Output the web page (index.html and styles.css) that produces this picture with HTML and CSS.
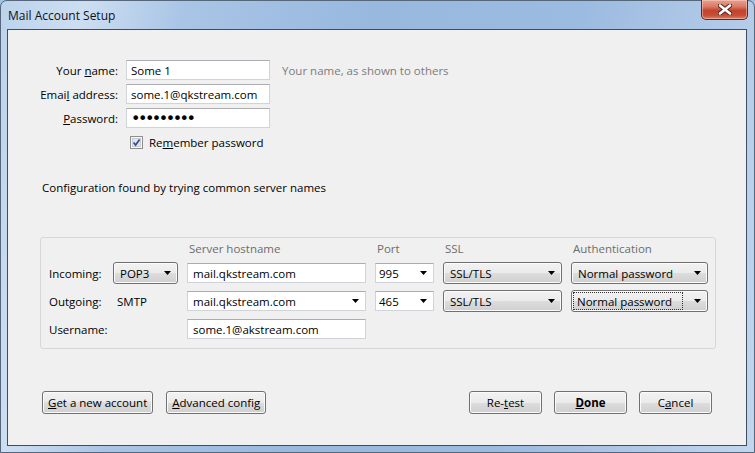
FILE: index.html
```html
<!DOCTYPE html>
<html lang="en">
<head>
    <meta charset="UTF-8">
    <meta name="viewport" content="width=device-width, initial-scale=1.0">
    <title>Mail Account Setup</title>
    <link rel="stylesheet" href="styles.css">
</head>
<body>

<div class="window">
    <div class="titlebar">
        <span class="title">Mail Account Setup</span>
        <div class="close">
            <svg width="14" height="11" viewBox="0 0 14 11">
                <path d="M2 1.5 L12 9.5 M12 1.5 L2 9.5" stroke="#5b2419" stroke-width="4.6" stroke-linecap="round"/>
                <path d="M2 1.5 L12 9.5 M12 1.5 L2 9.5" stroke="#ffffff" stroke-width="2.6" stroke-linecap="round"/>
            </svg>
        </div>
    </div>

    <div class="client">
        <div class="identity">
            <label class="label">Your <u>n</u>ame:</label>
            <input class="field" type="text" value="Some 1">
            <span class="hint">Your name, as shown to others</span>

            <label class="label">Emai<u>l</u> address:</label>
            <input class="field" type="text" value="some.1@qkstream.com">
            <span></span>

            <label class="label"><u>P</u>assword:</label>
            <input class="field password" type="password" value="123456789">
            <span></span>

            <label class="remember">
                <svg class="checkbox" width="13" height="13" viewBox="0 0 13 13">
                    <rect x="0.5" y="0.5" width="12" height="12" fill="#f6f6f6" stroke="#8e8f8f"/>
                    <rect x="2.5" y="2.5" width="8" height="8" fill="#e1e4ea" stroke="#b4bac4" stroke-width="0.6"/>
                    <path d="M3.6 6.4 L5.6 9 L9.6 3.4" stroke="#3a4d88" stroke-width="1.7" fill="none"/>
                </svg>
                <span>Re<u>m</u>ember password</span>
            </label>
        </div>

        <p class="status">Configuration found by trying common server names</p>

        <div class="servers">
            <span></span>
            <span></span>
            <span class="colhead">Server hostname</span>
            <span class="colhead">Port</span>
            <span class="colhead">SSL</span>
            <span class="colhead">Authentication</span>

            <span class="rowlabel">Incoming:</span>
            <div class="dropdown"><span class="value">POP3</span><svg class="arrow" width="7" height="4"><polygon points="0,0 7,0 3.5,4" fill="#000"/></svg></div>
            <input class="field" type="text" value="mail.qkstream.com">
            <div class="combo"><span class="value">995</span><svg class="arrow" width="7" height="4"><polygon points="0,0 7,0 3.5,4" fill="#000"/></svg></div>
            <div class="dropdown"><span class="value">SSL/TLS</span><svg class="arrow" width="7" height="4"><polygon points="0,0 7,0 3.5,4" fill="#000"/></svg></div>
            <div class="dropdown"><span class="value">Normal password</span><svg class="arrow" width="7" height="4"><polygon points="0,0 7,0 3.5,4" fill="#000"/></svg></div>

            <span class="rowlabel">Outgoing:</span>
            <span class="protocol">SMTP</span>
            <div class="combo host"><span class="value">mail.qkstream.com</span><svg class="arrow" width="7" height="4"><polygon points="0,0 7,0 3.5,4" fill="#000"/></svg></div>
            <div class="combo"><span class="value">465</span><svg class="arrow" width="7" height="4"><polygon points="0,0 7,0 3.5,4" fill="#000"/></svg></div>
            <div class="dropdown"><span class="value">SSL/TLS</span><svg class="arrow" width="7" height="4"><polygon points="0,0 7,0 3.5,4" fill="#000"/></svg></div>
            <div class="dropdown focused"><span class="value">Normal password</span><svg class="arrow" width="7" height="4"><polygon points="0,0 7,0 3.5,4" fill="#000"/></svg></div>

            <span class="rowlabel">Username:</span>
            <span></span>
            <input class="field" type="text" value="some.1@akstream.com">
        </div>

        <div class="actions">
            <div class="btn-row">
                <button class="btn"><u>G</u>et a new account</button>
                <button class="btn"><u>A</u>dvanced config</button>
            </div>
            <div class="btn-row">
                <button class="btn">Re-<u>t</u>est</button>
                <button class="btn default"><u>D</u>one</button>
                <button class="btn">C<u>a</u>ncel</button>
            </div>
        </div>
    </div>
</div>

</body>
</html>
```

FILE: styles.css
```css
* {
    box-sizing: border-box;
}
body {
    margin: 0;
    font-family: "Open Sans", "Liberation Sans", sans-serif;
    font-size: 11.5px;
    color: #000;
    background-color: #a3c1e3;
}
.window {
    width: 755px;
    height: 453px;
    display: flex;
    flex-direction: column;
    padding: 0 7px 6px 6px;
    border: 1px solid #56677c;
    border-radius: 7px 7px 0 0;
    background: linear-gradient(100deg, #bcd3ec 0%, #cddef1 10%, #a9c5e6 22%, #98b8de 45%, #9cbbe0 70%, #b2cae8 88%, #c2d6ee 100%);
}
.titlebar {
    height: 28px;
    display: flex;
    align-items: center;
    justify-content: space-between;
}
.title {
    padding-left: 1px;
    font-size: 12px;
    color: #111;
}
.close {
    align-self: flex-start;
    width: 47px;
    height: 20px;
    margin: -1px -1px 0 0;
    display: flex;
    align-items: center;
    justify-content: center;
    border: 1px solid #5c2a22;
    border-top: none;
    border-radius: 0 0 5px 5px;
    background: linear-gradient(#e9a18f 0%, #d97a66 35%, #c2432e 55%, #c64d35 80%, #db8063 100%);
    box-shadow: inset 0 0 0 1px rgba(255, 220, 210, 0.45);
}
.client {
    flex: 1;
    display: flex;
    flex-direction: column;
    padding-top: 30px;
    background-color: #f0f0f0;
    border: 1px solid #3f4d60;
}

/* identity fields */
.identity {
    display: grid;
    grid-template-columns: 110px 144px auto;
    grid-auto-rows: 20px;
    column-gap: 8px;
    row-gap: 4px;
    align-items: center;
}
.label {
    text-align: right;
}
.hint {
    margin-left: 4px;
    color: #7c7c7c;
}
.field {
    height: 20px;
    width: 100%;
    margin: 0;
    padding: 0 4px;
    font-family: inherit;
    font-size: 11.5px;
    color: #000;
    background-color: #fff;
    border: 1px solid #d0d3d8;
    border-top-color: #abadb3;
    outline: none;
}
.password {
    font-family: "DejaVu Sans", sans-serif;
    font-size: 16px;
    letter-spacing: -2.5px;
}
.remember {
    grid-column: 2 / span 2;
    display: flex;
    align-items: center;
    gap: 6px;
    padding-left: 4px;
}
.status {
    margin: 28px 0 0 34px;
    line-height: 16px;
}

/* server settings box */
.servers {
    width: 676px;
    margin: 41px 0 0 32px;
    padding: 3px 7px 8px 8px;
    display: grid;
    grid-template-columns: 55px 65px 179px 59px 119px 137px;
    grid-template-rows: 15px 22px 22px 22px;
    column-gap: 9px;
    row-gap: 6px;
    align-items: center;
    border: 1px solid #d7d7d7;
    border-radius: 3px;
}
.colhead {
    padding-left: 2px;
    color: #6d6d6d;
}
.servers .field {
    padding-left: 5px;
}
.protocol {
    padding-left: 4px;
}
.dropdown,
.combo {
    height: 22px;
    display: flex;
    align-items: center;
    justify-content: space-between;
    padding: 0 6px;
}
.dropdown {
    border: 1px solid #707070;
    border-radius: 3px;
    background: linear-gradient(#f2f2f2 0%, #ebebeb 50%, #dddddd 50%, #cfcfcf 100%);
    box-shadow: inset 0 0 0 1px #fbfbfb;
}
.combo {
    height: 20px;
    padding: 0 6px 0 3px;
    background-color: #fff;
    border: 1px solid #d0d3d8;
    border-top-color: #abadb3;
}
.combo.host {
    padding-left: 5px;
}
.dropdown.focused {
    padding-left: 2px;
}
.dropdown.focused .value {
    flex: 1;
    align-self: stretch;
    display: flex;
    align-items: center;
    margin: 2px 12px 2px 0;
    padding-left: 3px;
    outline: 1px dotted #333;
}

/* bottom buttons */
.actions {
    margin-top: 42px;
    padding: 0 34px;
    display: flex;
    justify-content: space-between;
}
.btn-row {
    display: flex;
    gap: 12px;
}
.btn-row:first-child {
    gap: 13px;
}
.btn {
    height: 23px;
    min-width: 73px;
    padding: 0 5px;
    font-family: inherit;
    font-size: 11.5px;
    color: #000;
    border: 1px solid #707070;
    border-radius: 3px;
    background: linear-gradient(#f2f2f2 0%, #ebebeb 50%, #dddddd 50%, #cfcfcf 100%);
    box-shadow: inset 0 0 0 1px #fbfbfb;
}
.btn.default {
    font-weight: bold;
}
```
